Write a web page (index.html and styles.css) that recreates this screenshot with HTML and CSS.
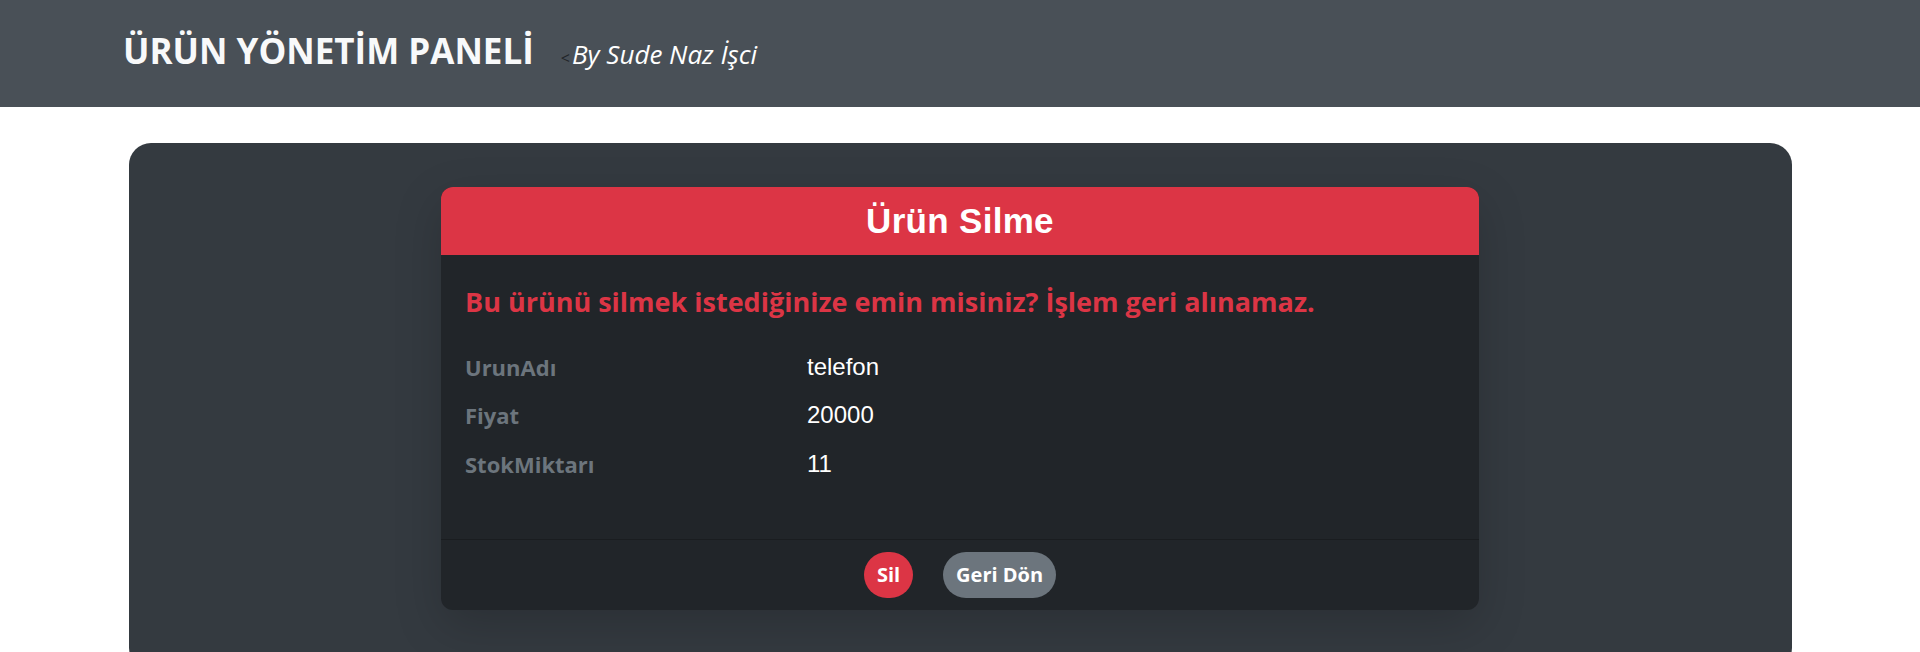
FILE: index.html
```html
<!DOCTYPE html>
<html lang="tr">
<head>
<meta charset="utf-8">
<title>Ürün Yönetim Paneli</title>
<link rel="stylesheet" href="styles.css">
</head>
<body>
<header class="topbar">
  <div class="brand">
    <h1 class="brand-title">ÜRÜN YÖNETİM PANELİ</h1>
    <span class="brand-sub"><span class="brand-lt">&lt;</span><em class="brand-by">By Sude Naz İşci</em></span>
  </div>
</header>
<main class="page">
  <section class="panel">
    <div class="card">
      <div class="card-header">
        <h2 class="card-title">Ürün Silme</h2>
      </div>
      <div class="card-body">
        <h3 class="warn">Bu ürünü silmek istediğinize emin misiniz? İşlem geri alınamaz.</h3>
        <dl class="details">
          <dt>UrunAdı</dt><dd>telefon</dd>
          <dt>Fiyat</dt><dd>20000</dd>
          <dt>StokMiktarı</dt><dd>11</dd>
        </dl>
      </div>
      <div class="card-footer">
        <button class="btn btn-danger" type="button">Sil</button>
        <button class="btn btn-secondary" type="button">Geri Dön</button>
      </div>
    </div>
  </section>
</main>
</body>
</html>
```

FILE: styles.css
```css
* { box-sizing: border-box; }

html, body {
  margin: 0;
  padding: 0;
  background: #ffffff;
  font-family: "Open Sans", "Noto Sans", sans-serif;
  overflow: hidden;
}

.topbar {
  height: 107px;
  background: #495057;
  display: flex;
  align-items: center;
  padding-left: 123px;
  padding-bottom: 5px;
}

.brand {
  display: flex;
  align-items: baseline;
}

.brand-title {
  margin: 0;
  font-size: 35px;
  font-weight: 700;
  color: #f8f9fa;
  line-height: 1.2;
}

.brand-sub {
  margin-left: 27px;
  display: inline-flex;
  align-items: baseline;
}

.brand-lt {
  font-size: 16px;
  color: #212529;
  margin-right: 2px;
}

.brand-by {
  font-size: 26px;
  font-style: italic;
  color: #ffffff;
}

.page {
  padding-top: 36px;
}

.panel {
  width: 1663px;
  margin: 0 auto;
  background: #343a40;
  border-radius: 22px;
  padding: 44px 0 60px;
}

.card {
  width: 1038px;
  margin: 0 auto;
  background: #212529;
  border-radius: 12px;
  box-shadow: 0 1rem 3rem rgba(0, 0, 0, 0.175);
  overflow: hidden;
}

.card-header {
  height: 68px;
  background: #dc3545;
  display: flex;
  align-items: center;
  justify-content: center;
}

.card-title {
  margin: 0;
  font-family: "Liberation Sans", Arial, sans-serif;
  font-weight: 700;
  font-size: 35px;
  letter-spacing: 0.3px;
  color: #ffffff;
  line-height: 1.2;
}

.card-body {
  padding: 31px 24px 51px;
}

.warn {
  margin: 0 0 24px;
  font-size: 27px;
  font-weight: 700;
  color: #dc3545;
  line-height: 1.2;
}

.details {
  margin: 0;
  display: grid;
  grid-template-columns: 342px 1fr;
  grid-auto-rows: 48.5px;
  align-items: center;
}

.details dt {
  font-size: 22px;
  font-weight: 700;
  color: #6c757d;
}

.details dd {
  margin: 0;
  font-family: "Liberation Sans", Arial, sans-serif;
  font-size: 24px;
  color: #ffffff;
}

.card-footer {
  border-top: 1px solid #1a1d20;
  padding: 12px 0 12px;
  display: flex;
  justify-content: center;
  gap: 30px;
}

.btn {
  font-family: "Open Sans", "Noto Sans", sans-serif;
  font-size: 20px;
  font-weight: 700;
  line-height: 1.5;
  height: 46px;
  padding: 0 13px;
  border: 0;
  border-radius: 999px;
  color: #ffffff;
}

.btn-danger { background: #dc3545; }
.btn-secondary { background: #6c757d; }
```
